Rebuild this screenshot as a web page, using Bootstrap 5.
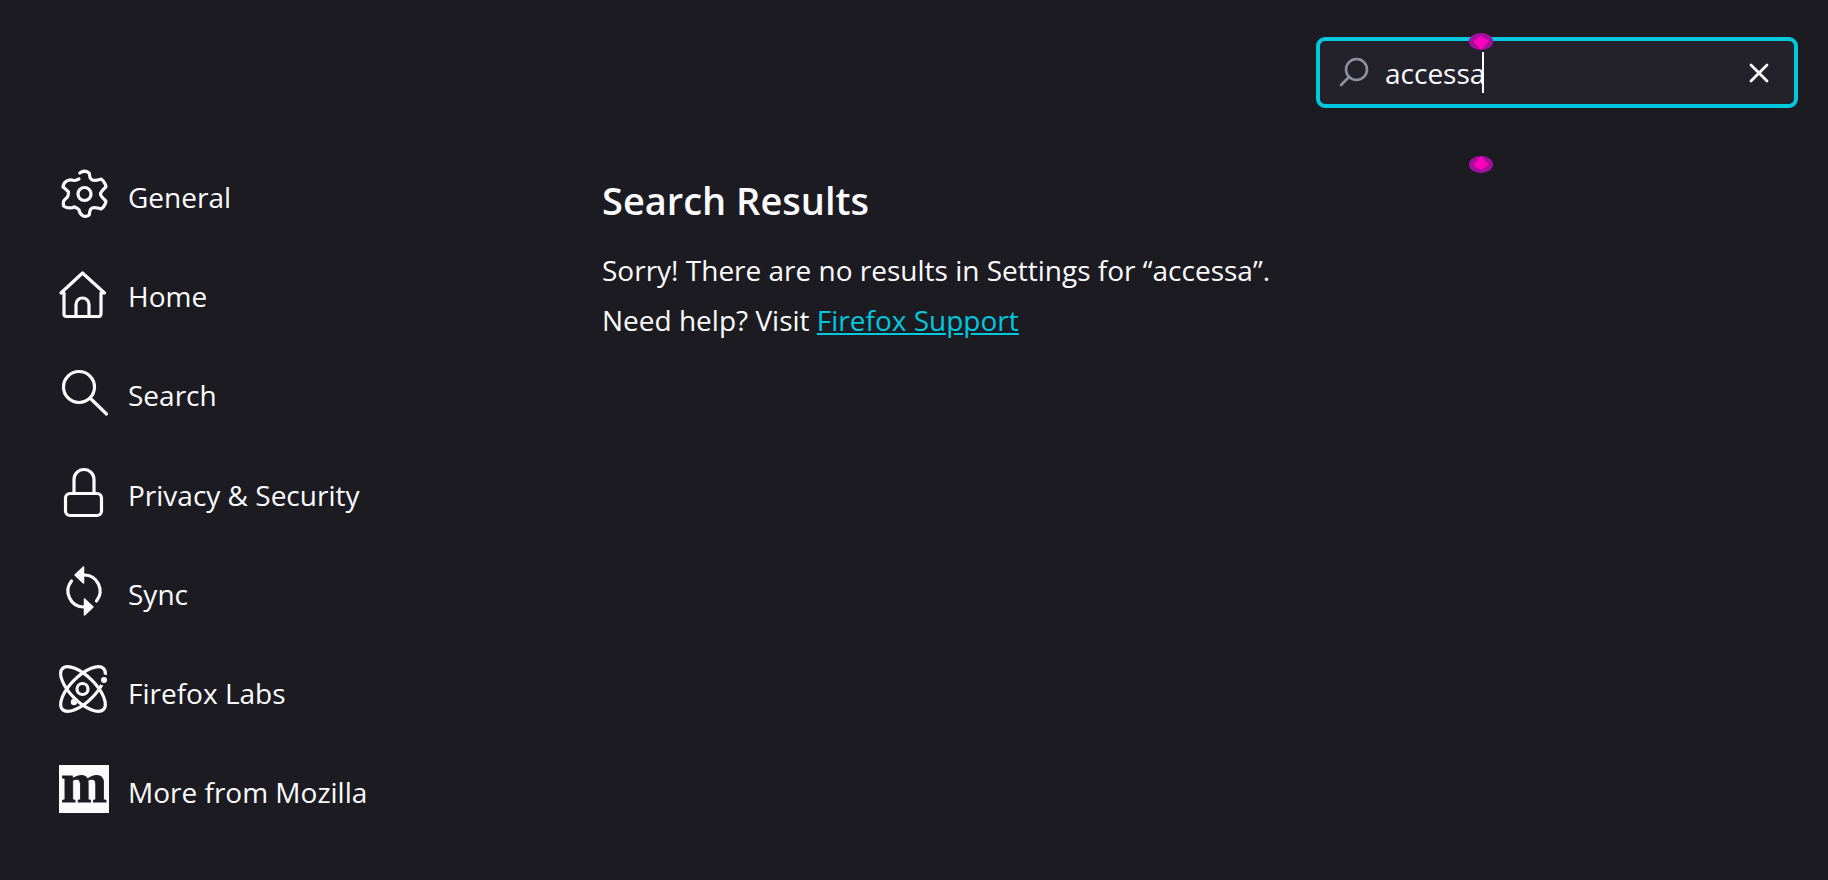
<!DOCTYPE html>
<html lang="en">
<head>
<meta charset="UTF-8">
<title>Settings</title>
<link href="https://cdn.jsdelivr.net/npm/bootstrap@5.3.2/dist/css/bootstrap.min.css" rel="stylesheet">
<style>
body { background: #1c1b22; color: #fbfbfe; font-family: "Open Sans", "Noto Sans", sans-serif; font-size: 28px; height: 880px; overflow: hidden; }
.top-bar { padding: 37px 30px 0 0; height: 169px; }
.find-box { width: 482px; height: 71px; background: #23222b; border: 4px solid #00c8de; border-radius: 9px; padding: 0 25px 0 18px; }
.find-box .find-text { font-size: 28px; line-height: 1; margin-left: 15px; }
.find-wrap { position: relative; }
.sel-caret { position: absolute; left: 166px; top: 15px; width: 2px; height: 41px; background: #fff; }
.sel-handle { position: absolute; left: 153px; width: 24px; height: 17px; }
.sel-top { top: -4px; }
.sel-bottom { bottom: -4px; }
.side-nav { width: 602px; padding-left: 59px; gap: 49.2px; }
.side-item { height: 50px; gap: 19px; }
.side-item svg { flex: none; overflow: visible; }
.side-item span { padding-top: 6px; }
.result-area { padding-top: 7px; }
.result-area h1 { font-size: 38px; font-weight: 600; line-height: 48px; margin-bottom: 21px; }
.result-area p { margin: 0; line-height: 50px; }
.result-area a { color: #00c8de; }
.ico { fill: none; stroke: #fbfbfe; stroke-width: 3.2; stroke-linecap: round; stroke-linejoin: round; }
</style>
</head>
<body>

<div class="top-bar d-flex justify-content-end">
  <div class="find-wrap">
    <div class="find-box d-flex align-items-center">
      <svg width="32" height="32" viewBox="0 0 32 32" fill="none" stroke="#8f8f9d" stroke-width="2.6" stroke-linecap="round"><circle cx="18.5" cy="12.5" r="10.5"/><path d="M11 20 3 28"/></svg>
      <span class="find-text">accessa</span>
      <svg class="ms-auto" width="20" height="20" viewBox="0 0 20 20" stroke="#fbfbfe" stroke-width="2.8" stroke-linecap="round"><path d="M2 2 18 18M18 2 2 18"/></svg>
    </div>
    <div class="sel-caret"></div>
    <svg class="sel-handle sel-top" viewBox="0 0 24 17"><ellipse cx="12" cy="8.5" rx="12" ry="8.5" fill="#a3109f"/><path d="M4 8 12 3 20 8 12 17Z" fill="#ff00bb"/></svg>
    <svg class="sel-handle sel-bottom" viewBox="0 0 24 17"><ellipse cx="12" cy="8.5" rx="12" ry="8.5" fill="#a3109f"/><path d="M4 9 12 0 20 9 12 14Z" fill="#ff00bb"/></svg>
  </div>
</div>

<div class="d-flex">
  <div class="side-nav d-flex flex-column">
    <div class="side-item d-flex align-items-center">
      <svg class="ico" width="50" height="50" viewBox="0 0 50 50"><path d="M20.8 4Q25.5 .5 30.2 4C31 9 31 10 33.5 11.1 36 12.2 37 11.2 42.2 10 46.5 13 47 18 46.9 18 43 21.5 41.5 23 41.5 25 41.5 27 43 28.5 46.9 32 47 32 46.5 37 42.2 40 37 38.8 36 37.8 33.5 38.9 31 40 31 41 30.2 46 25.5 49.5 20.8 46 20 41 20 40 17.5 38.9 15 37.8 14 38.8 8.8 40 4.5 37 4 32 4.1 32 8 28.5 9.5 27 9.5 25 9.5 23 8 21.5 4.1 18 4 18 4.5 13 8.8 10 14 11.2 15 12.2 17.5 11.1 20 10 20 9 20.8 4Z"/><circle cx="25.5" cy="25" r="6.5"/></svg>
      <span>General</span>
    </div>
    <div class="side-item d-flex align-items-center">
      <svg class="ico" width="50" height="50" viewBox="0 0 50 50"><path d="M2 25 23.5 5 45.5 25H42V46a2.5 2.5 0 0 1-2.5 2.5H7.5A2.5 2.5 0 0 1 5 46V25Z"/><path d="M17 48V36.500a6.500 6.500 0 0 1 13 0V48"/></svg>
      <span>Home</span>
    </div>
    <div class="side-item d-flex align-items-center">
      <svg class="ico" width="50" height="50" viewBox="0 0 50 50"><circle cx="20" cy="20" r="15.500"/><path d="M31.500 31.500 47.500 47"/></svg>
      <span>Search</span>
    </div>
    <div class="side-item d-flex align-items-center">
      <svg class="ico" width="50" height="50" viewBox="0 0 50 50"><rect x="6.500" y="26.500" width="36" height="22" rx="4.500"/><path d="M15 26V12.500a10 10 0 0 1 20 0V26"/></svg>
      <span>Privacy &amp; Security</span>
    </div>
    <div class="side-item d-flex align-items-center">
      <svg class="ico" width="50" height="50" viewBox="0 0 50 50"><path d="M25 9A16 16 0 0 1 37.500 35M25 41A16 16 0 0 1 12.500 15"/><path d="M16 9 24.500 1V17Z" fill="#fbfbfe" stroke-width="1.500"/><path d="M34 41 25.500 33V49Z" fill="#fbfbfe" stroke-width="1.500"/></svg>
      <span>Sync</span>
    </div>
    <div class="side-item d-flex align-items-center">
      <svg class="ico" width="50" height="50" viewBox="0 0 50 50"><ellipse cx="24" cy="24" rx="29" ry="12.500" transform="rotate(45 24 24)"/><ellipse cx="24" cy="24" rx="29" ry="12.500" transform="rotate(-45 24 24)"/><circle cx="23.500" cy="24" r="5.500"/><circle cx="45" cy="15" r="5.500" fill="#1c1b22" stroke="none"/><circle cx="45" cy="15" r="3" fill="#fbfbfe" stroke="none"/><circle cx="15" cy="37" r="3.200" fill="#fbfbfe" stroke="none"/></svg>
      <span>Firefox Labs</span>
    </div>
    <div class="side-item d-flex align-items-center">
      <svg width="50" height="50" viewBox="0 0 50 50"><rect y="1" width="50" height="48" fill="#fbfbfe"/><text x="2" y="38" font-family="Liberation Serif" font-weight="700" font-size="56" textLength="46" lengthAdjust="spacingAndGlyphs" fill="#1c1b22" stroke="#1c1b22" stroke-width=".8">m</text></svg>
      <span>More from Mozilla</span>
    </div>
  </div>

  <div class="result-area">
    <h1>Search Results</h1>
    <p>Sorry! There are no results in Settings for “accessa”.</p>
    <p>Need help? Visit <a href="#">Firefox Support</a></p>
  </div>
</div>

</body>
</html>
